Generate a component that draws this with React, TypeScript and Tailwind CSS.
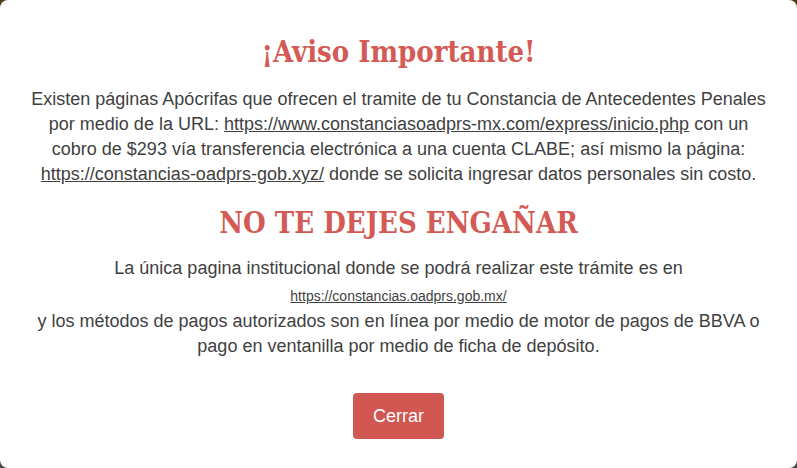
import React from 'react'

export default function App() {
  return (
    <div className="w-[797px] h-[468px] bg-gradient-to-b from-[#4a3c12] to-[#4a4a48]">
      <div
        className="w-full h-full bg-white rounded-[8px] flex flex-col items-center text-center pt-[33px]"
        style={{ fontFamily: '"Liberation Sans", Arial, sans-serif' }}
      >
        <h2
          className="text-[29px] leading-[38px] font-bold text-[#d45b55]"
          style={{ fontFamily: '"DejaVu Serif Condensed", "DejaVu Serif", serif' }}
        >
          ¡Aviso Importante!
        </h2>
        <p className="mt-[16px] px-[20px] text-[18px] leading-[25px] text-[#3f3f3f]">
          Existen páginas Apócrifas que ofrecen el tramite de tu Constancia de Antecedentes Penales
          <br />
          por medio de la URL: <a className="underline">https://www.constanciasoadprs-mx.com/express/inicio.php</a> con un
          <br />
          cobro de $293 vía transferencia electrónica a una cuenta CLABE; así mismo la página:
          <br />
          <a className="underline">https://constancias-oadprs-gob.xyz/</a> donde se solicita ingresar datos personales sin costo.
        </p>
        <h2
          className="mt-[17px] text-[29px] leading-[38px] font-bold text-[#d45b55]"
          style={{ fontFamily: '"DejaVu Serif Condensed", "DejaVu Serif", serif' }}
        >
          NO TE DEJES ENGAÑAR
        </h2>
        <p className="mt-[14px] text-[18px] leading-[25px] text-[#3f3f3f]">
          La única pagina institucional donde se podrá realizar este trámite es en
        </p>
        <a className="mt-[4px] text-[14px] leading-[22px] text-[#3f3f3f] underline">
          https://constancias.oadprs.gob.mx/
        </a>
        <p className="mt-[2px] text-[18px] leading-[25px] text-[#3f3f3f]">
          y los métodos de pagos autorizados son en línea por medio de motor de pagos de BBVA o
          <br />
          pago en ventanilla por medio de ficha de depósito.
        </p>
        <button className="mt-[34px] w-[91px] h-[46px] rounded-[4px] bg-[#d15752] text-white text-[18px]">
          Cerrar
        </button>
      </div>
    </div>
  )
}
